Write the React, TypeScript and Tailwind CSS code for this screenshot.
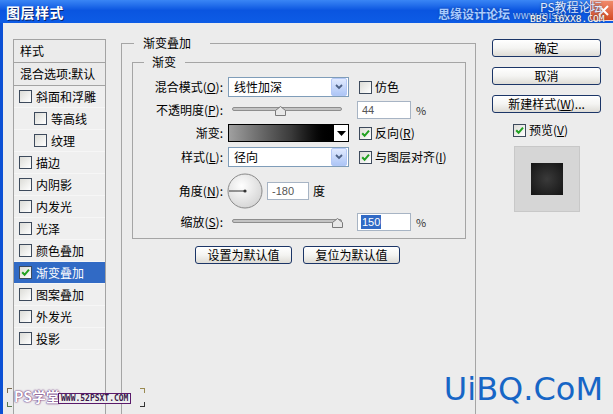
import React from 'react'

const Check = ({ on }: { on?: boolean }) => (
  <span className="w-[13px] h-[13px] shrink-0 border border-[#3d4a5c] bg-linear-to-br from-[#dcdcd7] to-white flex items-center justify-center">
    {on && (
      <svg width="9" height="9" viewBox="0 0 9 9">
        <path d="M1.2 4.2 L3.6 6.8 L8 1.6" stroke="#21a121" strokeWidth="2" fill="none" />
      </svg>
    )}
  </span>
)

const Chevron = () => (
  <span className="w-[16px] h-[18px] mr-px rounded-[2px] border border-[#b4c8f6] bg-linear-to-b from-[#e1eafe] to-[#aec6f6] flex items-center justify-center">
    <svg width="8" height="6" viewBox="0 0 8 6">
      <path d="M1 1 L4 4 L7 1" stroke="#4d6185" strokeWidth="1.8" fill="none" />
    </svg>
  </span>
)

const Select = ({ value }: { value: string }) => (
  <div className="w-[121px] h-[20px] border border-[#7f9db9] bg-white flex items-center justify-between">
    <span className="pl-[5px]">{value}</span>
    <Chevron />
  </div>
)

const Thumb = () => (
  <svg width="11" height="10" viewBox="0 0 11 10">
    <path d="M0.5 4.5 L5.5 0.5 L10.5 4.5 L10.5 9.5 L0.5 9.5 Z" fill="#e8e8e8" stroke="#7a7a7a" />
  </svg>
)

const Slider = ({ pos }: { pos: number }) => (
  <div className="w-[121px] h-full relative">
    <div className="absolute left-[4px] right-[7px] top-[6px] h-[4px] rounded-full border border-[#8e8e8e] bg-[#c4c4c4]" />
    <div className="absolute top-[5px]" style={{ left: pos }}>
      <Thumb />
    </div>
  </div>
)

const Btn = ({ children, w }: { children: React.ReactNode; w: string }) => (
  <div className={`${w} h-[18px] rounded-[3px] border border-[#1b3567] bg-linear-to-b from-white via-[#f4f4f2] to-[#dedcd6] flex items-center justify-center`}>
    {children}
  </div>
)

const Label = ({ children }: { children: React.ReactNode }) => (
  <div className="w-[91px] text-right pr-[1px]">{children}</div>
)

const styles = [
  { t: '斜面和浮雕' },
  { t: '等高线', sub: true },
  { t: '纹理', sub: true },
  { t: '描边' },
  { t: '内阴影' },
  { t: '内发光' },
  { t: '光泽' },
  { t: '颜色叠加' },
  { t: '渐变叠加', on: true },
  { t: '图案叠加' },
  { t: '外发光' },
  { t: '投影' },
]

export default function App() {
  return (
    <div className="w-[613px] h-[414px] overflow-hidden relative bg-[#ececec] text-[12px] text-black leading-[16px] font-['Noto_Sans_CJK_SC',sans-serif]">
      {/* title bar */}
      <div className="h-[23px] bg-linear-to-b from-[#3a86f5] via-[#0a55e0] via-45% to-[#0d5ce6] flex items-center pl-[6px]">
        <span className="text-white font-bold text-[14px] tracking-[0.5px] [text-shadow:1px_1px_0_#0a246a]">图层样式</span>
      </div>

      <div className="flex items-start h-[391px] border-l-[3px] border-[#0b50d5]">
        {/* style list */}
        <div className="ml-[10px] mt-[16px] w-[93px] h-[375px] border border-[#a3a3a3] border-b-0 bg-[#efefef]">
          <div className="h-[23px] border-b border-[#a3a3a3] pl-[6px] flex items-center bg-[#ebebeb]">样式</div>
          <div className="h-[23px] border-b border-[#a3a3a3] pl-[6px] flex items-center bg-[#ebebeb] whitespace-nowrap">混合选项:默认</div>
          {styles.map((s) => (
            <div
              key={s.t}
              className={`h-[22px] flex items-center gap-[4px] border-b border-[#f6f6f6] ${s.sub ? 'pl-[20px]' : 'pl-[5px]'} ${s.on ? 'bg-[#316ac5] text-white' : ''}`}
            >
              <Check on={s.on} />
              <span>{s.t}</span>
            </div>
          ))}
        </div>

        {/* center */}
        <fieldset className="ml-[15px] mt-[12px] w-[355px] h-[420px] border border-[#a5a5a5] pl-[10px]">
          <legend className="ml-[2px] pl-[9px] pr-[19px] leading-[16px]">渐变叠加</legend>
          <fieldset className="mt-[3px] w-[334px] h-[185px] border border-[#a5a5a5] pb-[7px]">
            <legend className="ml-[11px] pl-[8px] pr-[9px] leading-[16px]">渐变</legend>

            <div className="mt-[7px] flex items-center h-[20px]">
              <Label>
                混合模式(<u>O</u>):
              </Label>
              <div className="ml-[4px]">
                <Select value="线性加深" />
              </div>
              <div className="ml-[10px] flex items-center gap-[3px]">
                <Check />
                <span>仿色</span>
              </div>
            </div>

            <div className="mt-[4px] flex items-center h-[18px]">
              <Label>
                不透明度(<u>P</u>):
              </Label>
              <div className="ml-[4px] h-full">
                <Slider pos={47} />
              </div>
              <div className="ml-[8px] w-[54px] h-[18px] border border-[#a7b4c4] bg-white pl-[4px] flex items-center text-[#555] font-['Liberation_Sans',sans-serif] text-[11px]">44</div>
              <span className="ml-[5px] text-[11px] text-[#333]">%</span>
            </div>

            <div className="mt-[5px] flex items-center h-[18px]">
              <Label>渐变:</Label>
              <div className="ml-[4px] flex h-[18px] w-[121px] border border-black">
                <div className="w-[105px] h-full bg-linear-to-r from-[#a0a0a0] via-[#3a3a3a] via-60% to-black border-r border-black" />
                <div className="flex-1 bg-white flex items-center justify-center">
                  <svg width="9" height="5" viewBox="0 0 9 5">
                    <path d="M0 0 L9 0 L4.5 5 Z" fill="#000" />
                  </svg>
                </div>
              </div>
              <div className="ml-[10px] flex items-center gap-[3px]">
                <Check on />
                <span>
                  反向(<u>R</u>)
                </span>
              </div>
            </div>

            <div className="mt-[5px] flex items-center h-[20px]">
              <Label>
                样式(<u>L</u>):
              </Label>
              <div className="ml-[4px]">
                <Select value="径向" />
              </div>
              <div className="ml-[10px] flex items-center gap-[3px]">
                <Check on />
                <span>
                  与图层对齐(<u>I</u>)
                </span>
              </div>
            </div>

            <div className="mt-[6px] flex items-center h-[36px]">
              <Label>
                角度(<u>N</u>):
              </Label>
              <svg className="ml-[3px]" width="36" height="36" viewBox="0 0 36 36">
                <defs>
                  <radialGradient id="dial" cx="40%" cy="35%" r="70%">
                    <stop offset="0" stopColor="#ffffff" />
                    <stop offset="1" stopColor="#d4d4d4" />
                  </radialGradient>
                </defs>
                <circle cx="18" cy="18" r="17" fill="url(#dial)" stroke="#8a8a8a" />
                <line x1="2" y1="18" x2="18" y2="18" stroke="#333" strokeWidth="1" />
                <circle cx="18" cy="18" r="1.6" fill="#333" />
              </svg>
              <div className="ml-[4px] w-[42px] h-[18px] border border-[#a7b4c4] bg-white pl-[4px] flex items-center text-[#555] font-['Liberation_Sans',sans-serif] text-[11px]">-180</div>
              <span className="ml-[4px]">度</span>
            </div>

            <div className="mt-[4px] flex items-center h-[18px]">
              <Label>
                缩放(<u>S</u>):
              </Label>
              <div className="ml-[4px] h-full">
                <Slider pos={104} />
              </div>
              <div className="ml-[8px] w-[54px] h-[18px] border border-[#a7b4c4] bg-white pl-[3px] flex items-center font-['Liberation_Sans',sans-serif] text-[11px]">
                <span className="bg-[#316ac5] text-white px-px leading-[14px]">150</span>
              </div>
              <span className="ml-[5px] text-[11px] text-[#333]">%</span>
            </div>
          </fieldset>

          <div className="mt-[7px] pl-[63px] flex gap-[11px]">
            <Btn w="w-[97px]">设置为默认值</Btn>
            <Btn w="w-[97px]">复位为默认值</Btn>
          </div>
        </fieldset>

        {/* right column */}
        <div className="ml-[16px] mt-[16px] w-[109px] flex flex-col">
          <Btn w="w-[109px]">确定</Btn>
          <div className="mt-[10px]">
            <Btn w="w-[109px]">取消</Btn>
          </div>
          <div className="mt-[10px]">
            <Btn w="w-[109px]">
              新建样式(<u>W</u>)...
            </Btn>
          </div>
          <div className="mt-[9px] pl-[21px] flex items-center gap-[3px]">
            <Check on />
            <span>
              预览(<u>V</u>)
            </span>
          </div>
          <div className="mt-[8px] ml-[22px] w-[66px] h-[66px] bg-[#d6d6d6] border border-[#c8c8c8] flex items-center justify-center">
            <div className="w-[32px] h-[32px] bg-[radial-gradient(circle,#3a3a3a,#141414)]" />
          </div>
        </div>
      </div>

      {/* close button and title watermarks */}
      <div className="absolute left-[590px] top-0 w-[26px] h-[21px] rounded-bl-[3px] bg-linear-to-b from-[#f08a6a] to-[#d44a22] border border-white/70 flex items-center justify-center">
        <svg width="11" height="11" viewBox="0 0 11 11">
          <path d="M1 1 L10 10 M10 1 L1 10" stroke="#fff" strokeWidth="2" />
        </svg>
      </div>
      <div className="absolute left-[438px] top-[6px] text-[12px] font-bold text-[#a9ccff] [text-shadow:0_0_2px_#123a8a] whitespace-nowrap">
        思缘设计论坛 <span className="text-[10px] font-normal">www.missy</span>
      </div>
      <div className="absolute left-[540px] top-0 text-[12px] leading-[14px] text-[#dfe9ff] [text-shadow:0_0_2px_#1d3c7a] whitespace-nowrap">PS教程论坛</div>
      <div className="absolute left-[530px] top-[13px] text-[9.5px] leading-[11px] text-white font-['DejaVu_Sans_Mono',monospace] [text-shadow:0_0_2px_#3a3a3a] whitespace-nowrap">BBS.16XX8.COM</div>

      <div className="absolute left-[7px] top-[388px] w-[5px] h-[5px] border-l border-t border-[#7a6a50]" />
      <div className="absolute left-[7px] top-[402px] w-[5px] h-[5px] border-l border-b border-[#5a7a50]" />
      <div className="absolute left-[14px] top-[388px] text-[14px] leading-[16px] font-bold text-white [text-shadow:0_0_1px_#5a1a6a,0_0_2px_#5a1a6a] whitespace-nowrap">PS学堂</div>
      <div className="absolute left-[58px] top-[393px] h-[11px] px-[2px] border border-[#5a1a6a] bg-[#eee] text-[8px] leading-[9px] font-bold text-[#3a1a4a] font-['DejaVu_Sans_Mono',monospace] whitespace-nowrap">WWW.52PSXT.COM</div>
      <div className="absolute left-[140px] top-[388px] w-[5px] h-[5px] border-r border-t border-[#9a8a50]" />
      <div className="absolute left-[140px] top-[402px] w-[5px] h-[5px] border-r border-b border-[#333]" />

      <div className="absolute right-[10px] top-[371px] text-[32px] leading-[36px] text-[#1766c6] font-['DejaVu_Sans',sans-serif]">UiBQ.CoM</div>
    </div>
  )
}
